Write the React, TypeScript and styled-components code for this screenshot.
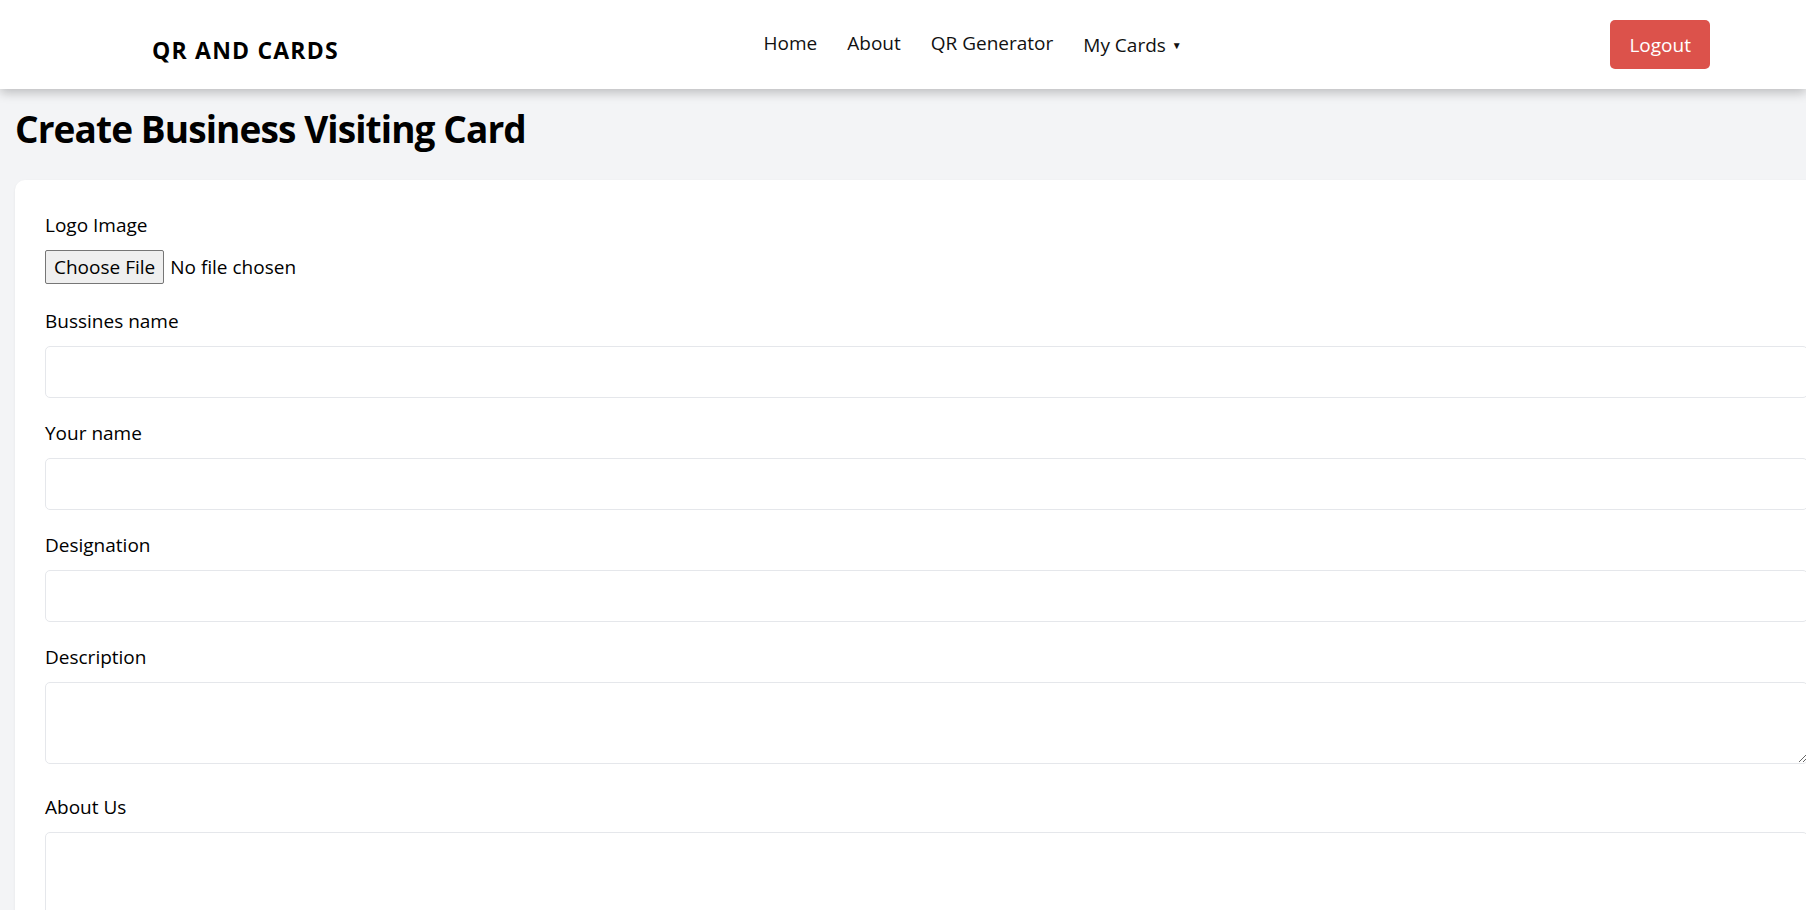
import styled, { createGlobalStyle } from "styled-components";

const GlobalStyle = createGlobalStyle`
  html, body {
    margin: 0;
    padding: 0;
    overflow-x: hidden;
    scrollbar-width: none;
  }
  ::-webkit-scrollbar {
    display: none;
  }
  body {
    background-color: #f3f4f6;
    font-family: "Open Sans", "Noto Sans", sans-serif;
    color: #000;
  }
  * {
    box-sizing: border-box;
  }
`;

const Header = styled.header`
  position: relative;
  z-index: 1;
  height: 89px;
  background-color: white;
  display: flex;
  align-items: center;
  justify-content: space-between;
  padding: 0 96px 0 152px;
  box-shadow: 0 4px 10px rgba(0, 0, 0, 0.22);
`;

const Logo = styled.div`
  font-size: 23px;
  font-weight: 700;
  letter-spacing: 1.2px;
  margin-top: 10px;
`;

const Nav = styled.nav`
  display: flex;
  align-items: center;
  gap: 30px;
  padding-bottom: 4px;
  margin-right: 4px;
`;

const NavLink = styled.a`
  font-size: 19px;
  color: #111;
  text-decoration: none;
  cursor: pointer;
`;

const DropdownBtn = styled.button`
  display: flex;
  align-items: center;
  gap: 6px;
  margin-top: 5px;
  padding: 0;
  border: none;
  background: none;
  font-family: inherit;
  font-size: 19px;
  color: #111;
  cursor: pointer;
`;

const Caret = styled.span`
  font-size: 10px;
`;

const LogoutBtn = styled.button`
  background-color: #dc524b;
  color: white;
  border: none;
  border-radius: 5px;
  padding: 10px 19px 9px;
  font-family: inherit;
  font-size: 19px;
  line-height: 30px;
  cursor: pointer;
`;

const Main = styled.main`
  padding: 15px 15px 0;
`;

const Title = styled.h1`
  margin: 0 0 26px;
  font-size: 37px;
  letter-spacing: -0.9px;
  line-height: 50px;
  font-weight: 700;
`;

const Card = styled.div`
  width: 1823px;
  background-color: white;
  border-radius: 10px;
  padding: 30px;
  box-shadow: 0 1px 3px rgba(0, 0, 0, 0.06);
`;

const Field = styled.div<{ $space?: number }>`
  padding-bottom: ${(p) => p.$space ?? 20}px;
`;

const Label = styled.label`
  display: block;
  font-size: 19px;
  line-height: 30px;
  margin-bottom: 10px;
`;

const FileInput = styled.input`
  display: block;
  font-family: inherit;
  font-size: 19px;
  line-height: 27px;
  color: #000;
  &::file-selector-button {
    font-family: inherit;
    font-size: 19px;
    padding: 3px 8px;
    margin-right: 6px;
    border: 1px solid #767676;
    border-radius: 2px;
    background-color: #efefef;
    color: #000;
  }
`;

const TextInput = styled.input`
  display: block;
  width: 100%;
  height: 52px;
  border: 1px solid #e5e7eb;
  border-radius: 5px;
  padding: 10px;
  font-family: inherit;
  font-size: 19px;
  &:focus {
    outline: none;
    border-color: #3b82f6;
  }
`;

const TextArea = styled.textarea<{ $h: number }>`
  display: block;
  width: 100%;
  height: ${(p) => p.$h}px;
  border: 1px solid #e5e7eb;
  border-radius: 5px;
  padding: 10px;
  font-family: inherit;
  font-size: 19px;
  &:focus {
    outline: none;
    border-color: #3b82f6;
  }
`;

function App() {
  return (
    <>
      <GlobalStyle />
      <Header>
        <Logo>QR AND CARDS</Logo>
        <Nav>
          <NavLink>Home</NavLink>
          <NavLink>About</NavLink>
          <NavLink>QR Generator</NavLink>
          <DropdownBtn>
            My Cards <Caret>▼</Caret>
          </DropdownBtn>
        </Nav>
        <LogoutBtn>Logout</LogoutBtn>
      </Header>
      <Main>
        <Title>Create Business Visiting Card</Title>
        <Card>
          <form onSubmit={(e) => e.preventDefault()}>
            <Field $space={22}>
              <Label htmlFor="logo">Logo Image</Label>
              <FileInput type="file" id="logo" accept="image/*" />
            </Field>
            <Field>
              <Label htmlFor="business">Bussines name</Label>
              <TextInput id="business" type="text" />
            </Field>
            <Field>
              <Label htmlFor="name">Your name</Label>
              <TextInput id="name" type="text" />
            </Field>
            <Field>
              <Label htmlFor="designation">Designation</Label>
              <TextInput id="designation" type="text" />
            </Field>
            <Field $space={28}>
              <Label htmlFor="description">Description</Label>
              <TextArea id="description" $h={82} />
            </Field>
            <Field $space={28}>
              <Label htmlFor="about">About Us</Label>
              <TextArea id="about" $h={142} />
            </Field>
          </form>
        </Card>
      </Main>
    </>
  );
}

export default App;
